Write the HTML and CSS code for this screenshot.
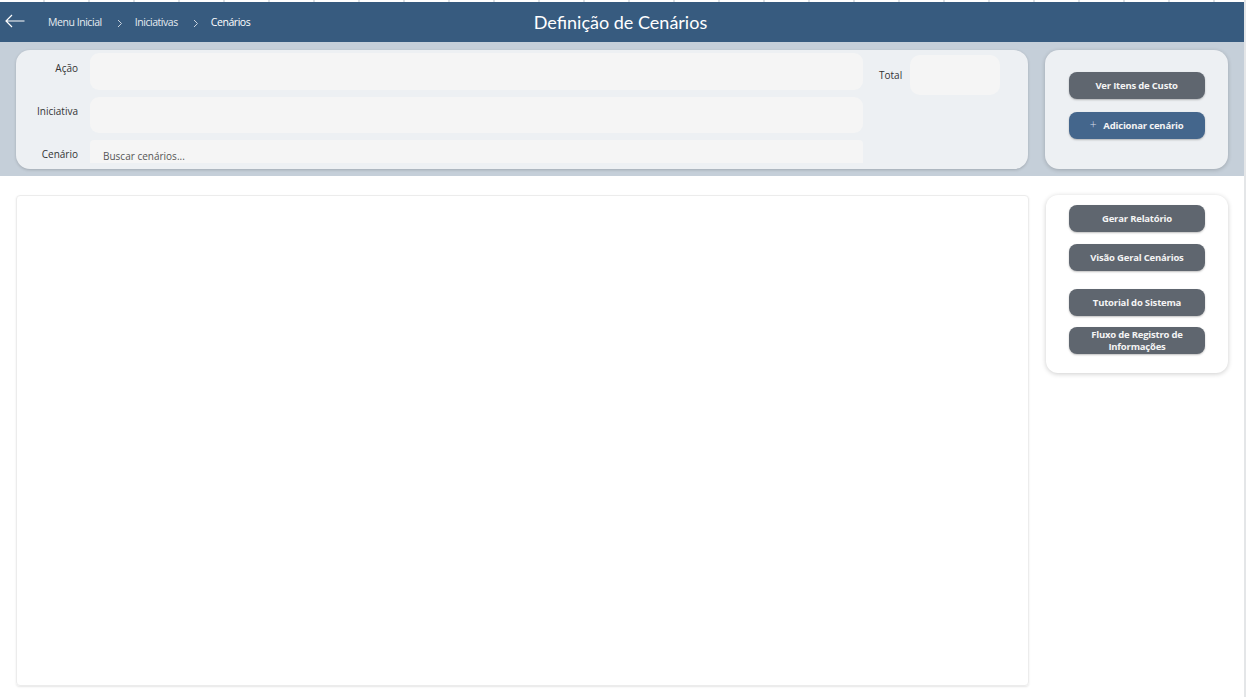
FILE: index.html
```html
<!DOCTYPE html>
<html lang="pt-BR">
<head>
  <meta charset="UTF-8">
  <title>Definição de Cenários</title>
  <link rel="stylesheet" href="styles.css">
</head>
<body>
  <div class="app">
    <div class="top-strip"></div>

    <header class="header">
      <div class="nav">
        <svg class="back" width="20" height="14" viewBox="0 0 20 14">
          <path d="M19.5 7H1M7 1L1 7L7 13" fill="none" stroke="#fff" stroke-width="1.2"/>
        </svg>
        <span class="crumb">Menu Inicial</span>
        <svg class="chev" width="6" height="9" viewBox="0 0 6 9"><path d="M1 1L4.5 4.5L1 8" fill="none" stroke="#c9d3de" stroke-width="1"/></svg>
        <span class="crumb">Iniciativas</span>
        <svg class="chev" width="6" height="9" viewBox="0 0 6 9"><path d="M1 1L4.5 4.5L1 8" fill="none" stroke="#c9d3de" stroke-width="1"/></svg>
        <span class="crumb current">Cenários</span>
      </div>
      <h1 class="title">Definição de Cenários</h1>
      <div></div>
    </header>

    <section class="band">
      <div class="filter-card">
        <div class="fields">
          <label class="field-label">Ação</label>
          <div class="input"></div>
          <label class="field-label">Iniciativa</label>
          <div class="input"></div>
          <label class="field-label">Cenário</label>
          <div class="input search">Buscar cenários...</div>
        </div>
        <div class="total">
          <span class="field-label">Total</span>
          <div class="total-box"></div>
        </div>
      </div>

      <div class="action-card">
        <button class="btn">Ver Itens de Custo</button>
        <button class="btn btn-blue"><span class="plus">+</span>Adicionar cenário</button>
      </div>
    </section>

    <main class="content">
      <div class="main-panel"></div>
      <aside class="side-card">
        <button class="btn">Gerar Relatório</button>
        <button class="btn">Visão Geral Cenários</button>
        <button class="btn gap-top">Tutorial do Sistema</button>
        <button class="btn two-line">Fluxo de Registro de Informações</button>
      </aside>
    </main>
  </div>
</body>
</html>
```

FILE: styles.css
```css
body {
  margin: 0;
  background: #fff;
  font-family: "Open Sans", "Noto Sans", sans-serif;
}

.app {
  width: 1244px;
  height: 697px;
  border-right: 2px solid #e4e6e8;
  overflow: hidden;
}

.top-strip {
  height: 2px;
  background: repeating-linear-gradient(to right, #fff 0, #fff 43px, #dde1e5 43px, #dde1e5 45px);
}

.header {
  height: 40px;
  background: #375b7f;
  display: grid;
  grid-template-columns: 1fr auto 1fr;
  align-items: center;
  color: #fff;
}

.nav {
  display: flex;
  align-items: center;
  padding-left: 5px;
}

.back {
  margin-right: 23px;
  margin-top: -2px;
}

.crumb {
  font-size: 10.5px;
  letter-spacing: -0.45px;
  color: #e6ebf1;
}

.crumb.current {
  color: #fff;
}

.chev {
  margin: 2px 12px 0 15px;
}

.title {
  margin: 0 0 0 -3px;
  font-family: Lato, sans-serif;
  font-weight: 400;
  font-size: 18px;
  color: #fff;
}

.band {
  background: #c5cfd9;
  padding: 8px 16px 7px;
  display: flex;
  gap: 17px;
}

.filter-card {
  width: 1013px;
  height: 119px;
  background: #edf0f3;
  border-radius: 14px;
  box-shadow: 0 1px 3px rgba(0, 0, 0, 0.18);
  display: flex;
  align-items: flex-start;
  overflow: hidden;
}

.fields {
  display: grid;
  grid-template-columns: 62px 773px;
  grid-template-rows: 37px 36px 36px;
  column-gap: 12px;
  row-gap: 7px;
  margin-top: 3px;
  height: 110px;
  overflow: hidden;
}

.field-label {
  font-size: 10px;
  color: #333;
  text-align: right;
  align-self: center;
  margin-bottom: 8px;
}

.input {
  background: #f5f5f5;
  border-radius: 9px;
}

.input.search {
  font-size: 10px;
  color: #555;
  padding: 9px 0 0 13px;
  border-radius: 4px 4px 0 0;
}

.total {
  display: flex;
  align-items: center;
  margin: 5px 0 0 16px;
  gap: 8px;
}

.total .field-label {
  margin-bottom: 0;
}

.total-box {
  width: 90px;
  height: 40px;
  background: #f5f5f5;
  border-radius: 10px;
}

.action-card {
  width: 183px;
  height: 119px;
  background: #edf0f3;
  border-radius: 14px;
  box-shadow: 0 1px 4px rgba(0, 0, 0, 0.2);
  display: flex;
  flex-direction: column;
  align-items: center;
  padding-top: 22px;
  box-sizing: border-box;
  gap: 13px;
}

.btn {
  width: 136px;
  height: 27px;
  border: none;
  border-radius: 8px;
  background: #5f666f;
  color: #f4f4f4;
  font-family: "Open Sans", "Noto Sans", sans-serif;
  font-weight: 700;
  font-size: 9.5px;
  letter-spacing: -0.2px;
  box-shadow: 0 1px 2px rgba(0, 0, 0, 0.25);
  padding: 0;
  line-height: 12px;
}

.btn-blue {
  background: #44668c;
}

.plus {
  font-weight: 300;
  font-size: 12px;
  margin-right: 7px;
  color: #d6dee8;
}

.content {
  display: flex;
  gap: 17px;
  padding: 19px 16px 0;
  align-items: flex-start;
}

.main-panel {
  width: 1011px;
  height: 489px;
  border: 1px solid #ececec;
  border-radius: 4px;
  box-shadow: 0 1px 2px rgba(0, 0, 0, 0.1);
}

.side-card {
  width: 182px;
  height: 178px;
  background: #fff;
  border-radius: 12px;
  box-shadow: 0 1px 5px rgba(0, 0, 0, 0.2);
  display: flex;
  flex-direction: column;
  align-items: center;
  padding-top: 10px;
  box-sizing: border-box;
  gap: 12px;
}

.side-card .gap-top {
  margin-top: 6px;
}

.side-card .two-line {
  margin-top: -1px;
  padding: 0 14px;
}
```
